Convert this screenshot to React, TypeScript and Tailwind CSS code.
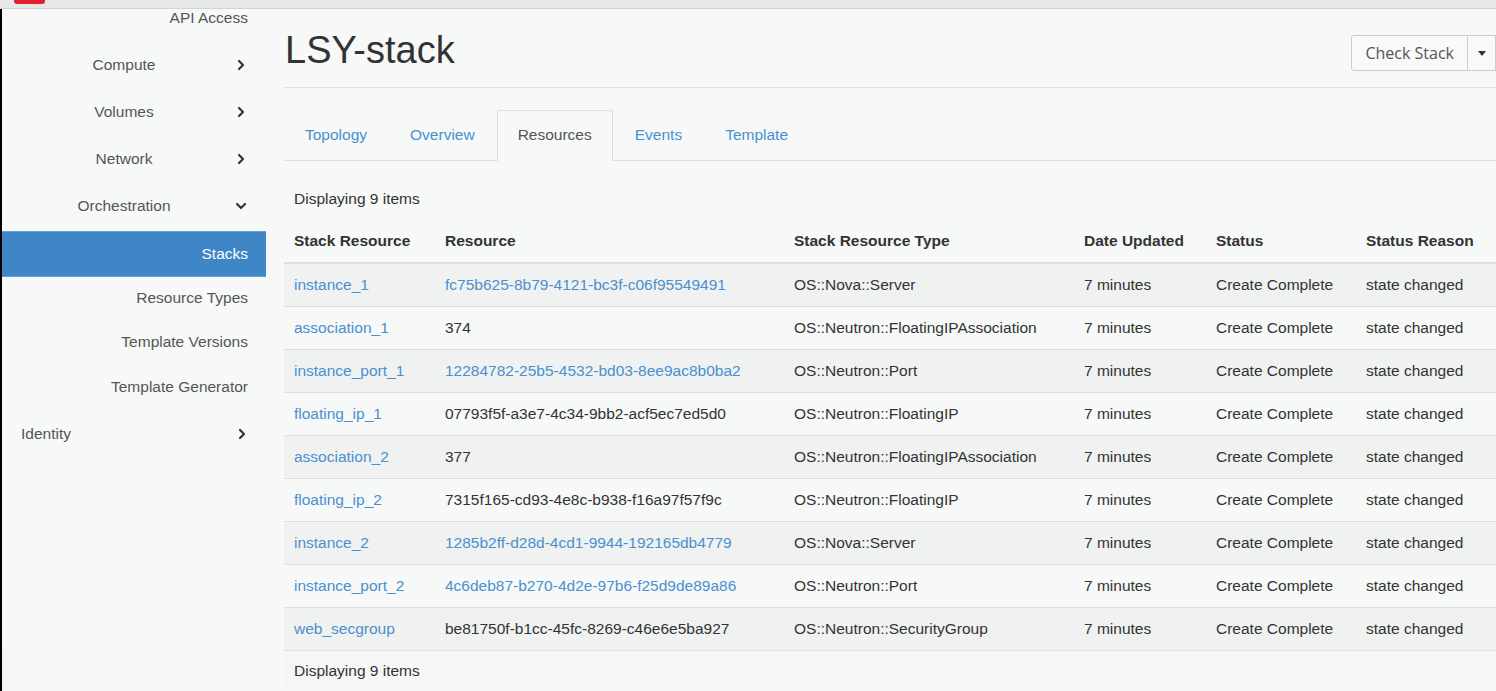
import { ChevronRight, ChevronDown } from "lucide-react";

const FONT = { fontFamily: '"Liberation Sans", Arial, sans-serif' };

const LINK = "text-[#4a90d0]";

const rows = [
  { name: "instance_1", res: "fc75b625-8b79-4121-bc3f-c06f95549491", link: true, type: "OS::Nova::Server" },
  { name: "association_1", res: "374", link: false, type: "OS::Neutron::FloatingIPAssociation" },
  { name: "instance_port_1", res: "12284782-25b5-4532-bd03-8ee9ac8b0ba2", link: true, type: "OS::Neutron::Port" },
  { name: "floating_ip_1", res: "07793f5f-a3e7-4c34-9bb2-acf5ec7ed5d0", link: false, type: "OS::Neutron::FloatingIP" },
  { name: "association_2", res: "377", link: false, type: "OS::Neutron::FloatingIPAssociation" },
  { name: "floating_ip_2", res: "7315f165-cd93-4e8c-b938-f16a97f57f9c", link: false, type: "OS::Neutron::FloatingIP" },
  { name: "instance_2", res: "1285b2ff-d28d-4cd1-9944-192165db4779", link: true, type: "OS::Nova::Server" },
  { name: "instance_port_2", res: "4c6deb87-b270-4d2e-97b6-f25d9de89a86", link: true, type: "OS::Neutron::Port" },
  { name: "web_secgroup", res: "be81750f-b1cc-45fc-8269-c46e6e5ba927", link: false, type: "OS::Neutron::SecurityGroup" },
];

const panels = [
  { label: "Compute", open: false },
  { label: "Volumes", open: false },
  { label: "Network", open: false },
  { label: "Orchestration", open: true },
];

const tabs = ["Topology", "Overview", "Resources", "Events", "Template"];

function Sidebar() {
  return (
    <div className="w-[266px] shrink-0 flex flex-col border-l-2 border-black">
      <div className="h-[642px] bg-[#f6f9f7] text-[15.5px] text-[#555]">
        <div className="h-[17px] leading-[17px] text-right pr-[18px]">API Access</div>
        <div className="h-[15px]"></div>
        {panels.map((p) => (
          <div key={p.label} className="h-[47px] flex items-center">
            <span className="w-[232px] pl-[12px] text-center">{p.label}</span>
            {p.open ? (
              <ChevronDown size={16} strokeWidth={3.2} className="ml-[-1px] text-[#333]" />
            ) : (
              <ChevronRight size={16} strokeWidth={3.2} className="ml-[-1px] text-[#333]" />
            )}
          </div>
        ))}
        <div className="h-[46px] mt-[2px] flex items-center justify-end pr-[18px] bg-[#3e86c6] border-y border-[#6aa2d6] text-white">
          Stacks
        </div>
        <div className="h-[42px] flex items-center justify-end pr-[18px]">Resource Types</div>
        <div className="h-[45px] flex items-center justify-end pr-[18px]">Template Versions</div>
        <div className="h-[45px] flex items-center justify-end pr-[18px]">Template Generator</div>
        <div className="h-[49px] flex items-center pl-[19px]">
          <span className="w-[213px]">Identity</span>
          <ChevronRight size={16} strokeWidth={3.2} className="text-[#333]" />
        </div>
      </div>
      <div className="flex-1 bg-[#f6f6f6]"></div>
    </div>
  );
}

function Header() {
  return (
    <div className="flex items-start justify-between pt-[20px] pb-[16px] border-b border-[#e1e4e2]">
      <h1 className="text-[38px] leading-[42px] text-[#333] ml-[1px]">LSY-stack</h1>
      <div className="flex mt-[6px] h-[36px] text-[16px] text-[#555]" style={{ fontFamily: '"Open Sans", sans-serif' }}>
        <button className="px-[13px] border border-[#ccc] rounded-l-[3px] bg-[#f8f9f8]">Check Stack</button>
        <button className="w-[28px] border-y border-r border-[#ccc] bg-[#f8f9f8] flex items-center justify-center">
          <span className="w-0 h-0 border-l-[4px] border-r-[4px] border-t-[5px] border-l-transparent border-r-transparent border-t-[#333]"></span>
        </button>
      </div>
    </div>
  );
}

function Tabs() {
  return (
    <div className="mt-[22px] flex border-b border-[#dcdfdd] text-[15.5px]">
      {tabs.map((t) => (
        <div
          key={t}
          className={
            t === "Resources"
              ? "px-[20px] py-[13px] leading-[22px] mr-[1px] -mb-px border border-[#dcdfdd] border-b-[#f6f9f7] rounded-t-[3px] bg-[#f6f9f7] text-[#555]"
              : "px-[20px] py-[13px] leading-[22px] mr-[1px] border border-transparent " + LINK
          }
        >
          {t}
        </div>
      ))}
    </div>
  );
}

function ResourceTable() {
  return (
    <table className="mt-[16px] w-full table-fixed border-collapse text-[15.5px] text-[#333]">
      <colgroup>
        <col className="w-[151px]" />
        <col className="w-[349px]" />
        <col className="w-[290px]" />
        <col className="w-[132px]" />
        <col className="w-[150px]" />
        <col />
      </colgroup>
      <thead>
        <tr className="h-[43px]">
          <th colSpan={6} className="px-[10px] text-left font-normal">Displaying 9 items</th>
        </tr>
        <tr className="h-[43px] border-b-2 border-[#dcdfdd]">
          <th className="px-[10px] text-left font-bold whitespace-nowrap">Stack Resource</th>
          <th className="px-[10px] text-left font-bold">Resource</th>
          <th className="px-[10px] text-left font-bold">Stack Resource Type</th>
          <th className="px-[10px] text-left font-bold whitespace-nowrap">Date Updated</th>
          <th className="px-[10px] text-left font-bold">Status</th>
          <th className="px-[10px] text-left font-bold whitespace-nowrap">Status Reason</th>
        </tr>
      </thead>
      <tbody>
        {rows.map((r, i) => (
          <tr key={r.name} className={"h-[43px] border-b border-[#dcdfdd] " + (i % 2 === 0 ? "bg-[#eff2f0]" : "bg-[#f6f9f7]")}>
            <td className={"px-[10px] whitespace-nowrap " + LINK}>{r.name}</td>
            <td className={"px-[10px] whitespace-nowrap " + (r.link ? LINK : "")}>{r.res}</td>
            <td className="px-[10px] whitespace-nowrap">{r.type}</td>
            <td className="px-[10px] whitespace-nowrap">7 minutes</td>
            <td className="px-[10px] whitespace-nowrap">Create Complete</td>
            <td className="px-[10px] whitespace-nowrap">state changed</td>
          </tr>
        ))}
      </tbody>
      <tfoot>
        <tr className="h-[40px] bg-[#f6f6f6]">
          <td colSpan={6} className="px-[10px]">Displaying 9 items</td>
        </tr>
      </tfoot>
    </table>
  );
}

export default function App() {
  return (
    <div className="w-[1496px] h-[691px] overflow-hidden flex flex-col bg-[#f6f9f7]" style={FONT}>
      <div className="h-[9px] shrink-0 bg-[#e5e8e6] border-b border-[#d2d5d3] flex items-start">
        <div className="ml-[14px] w-[31px] h-[4px] bg-[#e0202f] rounded-b-[3px]"></div>
      </div>
      <div className="flex flex-1 min-h-0">
        <Sidebar />
        <div className="flex-1 min-w-0 pl-[18px]">
          <Header />
          <Tabs />
          <ResourceTable />
        </div>
      </div>
    </div>
  );
}
